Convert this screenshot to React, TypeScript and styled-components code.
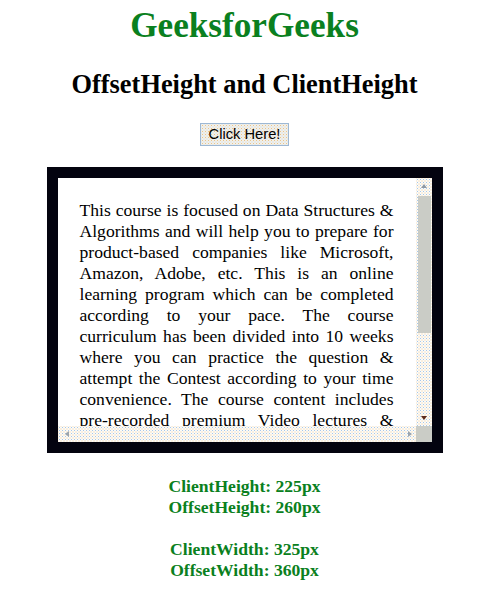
import React from "react";
import styled, { createGlobalStyle } from "styled-components";

const GlobalStyle = createGlobalStyle`
  html, body { margin: 0; padding: 0; background: #ffffff; }
  body { font-family: "Liberation Serif", "Times New Roman", serif; color: #000; }
`;

const Page = styled.main`
  width: 489px;
  display: flex;
  flex-direction: column;
  align-items: center;
  padding-top: 6px;
`;

const Title = styled.h1`
  margin: 0;
  font-size: 35.2px;
  line-height: 40px;
  font-weight: bold;
  color: #0a8020;
`;

const Subtitle = styled.h2`
  margin: 23.4px 0 0;
  font-size: 26.4px;
  line-height: 30px;
  font-weight: bold;
  color: #000;
`;

const ClickButton = styled.button`
  margin-top: 23.6px;
  width: 89px;
  height: 23px;
  padding: 0;
  border: 1px solid #9db8d4;
  font-family: "Liberation Sans", Arial, sans-serif;
  font-size: 14.7px;
  color: #000;
  background-color: #f3f0e8;
  background-image: radial-gradient(circle, #e6c490 0.6px, transparent 0.9px),
    radial-gradient(circle, #c4d6ea 0.6px, transparent 0.9px);
  background-size: 3px 3px, 3px 3px;
  background-position: 0 0, 1.5px 1.5px;
  cursor: pointer;
`;

const sparseDots = `
  background-color: #fcfbf8;
  background-image: radial-gradient(circle, #a9c7e6 0.6px, transparent 0.9px),
    radial-gradient(circle, #f0cc98 0.6px, transparent 0.9px);
  background-size: 3px 3px, 3px 3px;
  background-position: 0 0, 1.5px 1.5px;
`;

const denseChecker = `
  background-color: #c6cccc;
  background-image: radial-gradient(circle, #ecd2a8 0.5px, transparent 0.8px),
    radial-gradient(circle, #a2c2e4 0.5px, transparent 0.8px);
  background-size: 2px 2px, 2px 2px;
  background-position: 0 0, 1px 1px;
`;

const Frame = styled.div`
  margin-top: 21px;
  box-sizing: border-box;
  width: 396px;
  height: 286px;
  border: 11px solid #03030f;
  background: #fff;
  display: grid;
  grid-template-columns: 1fr 16px;
  grid-template-rows: 1fr 16px;
`;

const Viewport = styled.div`
  overflow: hidden;
  padding: 22px 22px 0;
`;

const CourseText = styled.p`
  margin: 0;
  font-size: 17.6px;
  line-height: 21px;
  text-align: justify;
`;

const VBar = styled.div`
  display: flex;
  flex-direction: column;
  ${sparseDots}
`;

const HBar = styled.div`
  display: flex;
  align-items: center;
  justify-content: space-between;
  padding: 0 4px 0 7px;
  ${sparseDots}
`;

const Corner = styled.div`
  ${denseChecker}
`;

const ArrowBox = styled.div`
  flex: 0 0 16px;
  height: 16px;
  display: flex;
  align-items: center;
  justify-content: center;
`;

type Dir = "up" | "down" | "left" | "right";

const Arrow = styled.span<{ $dir: Dir; $color: string }>`
  width: 0;
  height: 0;
  border-style: solid;
  border-color: transparent;
  ${(p) =>
    p.$dir === "up"
      ? `border-width: 0 3.5px 4px; border-bottom-color: ${p.$color};`
      : p.$dir === "down"
      ? `border-width: 4px 3.5px 0; border-top-color: ${p.$color};`
      : p.$dir === "left"
      ? `border-width: 3.5px 4px 3.5px 0; border-right-color: ${p.$color};`
      : `border-width: 3.5px 0 3.5px 4px; border-left-color: ${p.$color};`}
`;

const Track = styled.div`
  flex: 1;
  display: flex;
  flex-direction: column;
  padding: 2px 1px 0 2px;
`;

const Thumb = styled.div`
  height: 137px;
  ${denseChecker}
`;

const Results = styled.div`
  margin-top: 22.6px;
  text-align: center;
  font-size: 17.6px;
  line-height: 21px;
  font-weight: bold;
  color: #0a8020;
`;

const ResultLine = styled.div<{ $gap?: boolean }>`
  margin-top: ${(p) => (p.$gap ? "21px" : "0")};
`;

export default function App() {
  return (
    <>
      <GlobalStyle />
      <Page>
        <Title>GeeksforGeeks</Title>
        <Subtitle>OffsetHeight and ClientHeight</Subtitle>
        <ClickButton type="button">Click Here!</ClickButton>
        <Frame>
          <Viewport>
            <CourseText>
              This course is focused on Data Structures &amp; Algorithms and
              will help you to prepare for product-based companies like
              Microsoft, Amazon, Adobe, etc. This is an online learning program
              which can be completed according to your pace. The course
              curriculum has been divided into 10 weeks where you can practice
              the question &amp; attempt the Contest according to your time
              convenience. The course content includes pre-recorded premium
              Video lectures &amp; programming questions for practice. You will
              learn algorithmic techniques for solving various computational
              problems and will implement more than 200 algorithmic coding
              problems.
            </CourseText>
          </Viewport>
          <VBar>
            <ArrowBox>
              <Arrow $dir="up" $color="#8e98a4" />
            </ArrowBox>
            <Track>
              <Thumb />
            </Track>
            <ArrowBox>
              <Arrow $dir="down" $color="#5c2a1c" />
            </ArrowBox>
          </VBar>
          <HBar>
            <Arrow $dir="left" $color="#9aa4ae" />
            <Arrow $dir="right" $color="#9aa4ae" />
          </HBar>
          <Corner />
        </Frame>
        <Results>
          <ResultLine>ClientHeight: 225px</ResultLine>
          <ResultLine>OffsetHeight: 260px</ResultLine>
          <ResultLine $gap>ClientWidth: 325px</ResultLine>
          <ResultLine>OffsetWidth: 360px</ResultLine>
        </Results>
      </Page>
    </>
  );
}
